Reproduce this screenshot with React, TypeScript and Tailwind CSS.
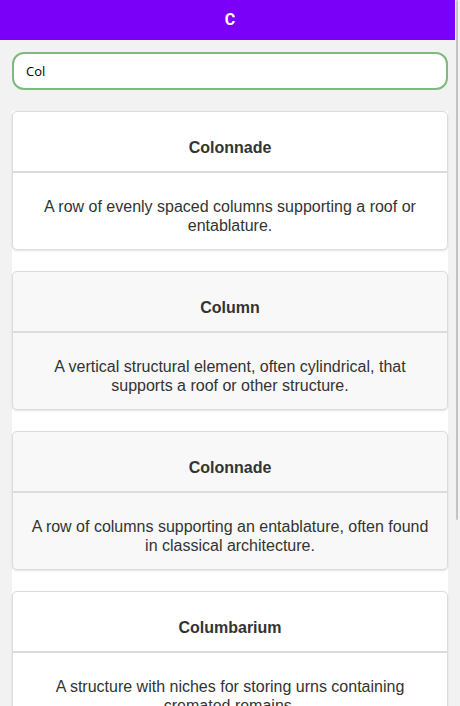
import { useState } from "react";

interface Term {
  id: number;
  name: string;
  meaning: string;
  tinted: boolean;
}

const terms: Term[] = [
  {
    id: 1,
    name: "Colonnade",
    meaning: "A row of evenly spaced columns supporting a roof or entablature.",
    tinted: false,
  },
  {
    id: 2,
    name: "Column",
    meaning:
      "A vertical structural element, often cylindrical, that supports a roof or other structure.",
    tinted: true,
  },
  {
    id: 3,
    name: "Colonnade",
    meaning:
      "A row of columns supporting an entablature, often found in classical architecture.",
    tinted: true,
  },
  {
    id: 4,
    name: "Columbarium",
    meaning: "A structure with niches for storing urns containing cremated remains.",
    tinted: false,
  },
];

export default function App() {
  const [query, setQuery] = useState<string>("Col");

  return (
    <div className="relative min-h-screen w-full bg-[#f2f2f2] font-['Liberation_Sans',Arial,sans-serif]">
      {/* Barre du haut */}
      <div className="h-10 w-full bg-[#7a00f7] flex items-center justify-center">
        <span className="text-white font-bold text-[16px] font-['Roboto',sans-serif]">C</span>
      </div>

      {/* Recherche */}
      <div className="px-3 pt-3">
        <input
          value={query}
          onChange={(e) => setQuery(e.target.value)}
          className="w-full h-[38px] rounded-[12px] border-2 border-[#7dba7d] bg-white px-3 text-[13px] text-black outline-none font-['Open_Sans',sans-serif]"
        />
      </div>

      {/* Liste */}
      <div className="mx-3 mt-[21px] bg-white flex flex-col gap-[21px]">
        {terms.map((item) => (
          <div
            key={item.id}
            className={`rounded-[5px] border border-[#dcdcdc] shadow-[0_1px_2px_rgba(0,0,0,0.12)] text-center text-[#333] ${
              item.tinted ? "bg-[#f8f8f8]" : "bg-white"
            }`}
          >
            <div className="pt-[27px] pb-[14px] text-[16px] leading-[18px] font-bold border-b-2 border-[#dcdcdc]">
              {item.name}
            </div>
            <div className="pt-[24px] pb-[14px] px-4 text-[16px] leading-[19px]">
              {item.meaning}
            </div>
          </div>
        ))}
      </div>

      {/* barre de défilement fine */}
      <div className="fixed top-0 right-0 w-[5px] h-screen bg-[#f2f2f2]">
        <div className="ml-[1px] w-[2px] h-[520px] rounded-full bg-[#c4c4c4]" />
      </div>
    </div>
  );
}
